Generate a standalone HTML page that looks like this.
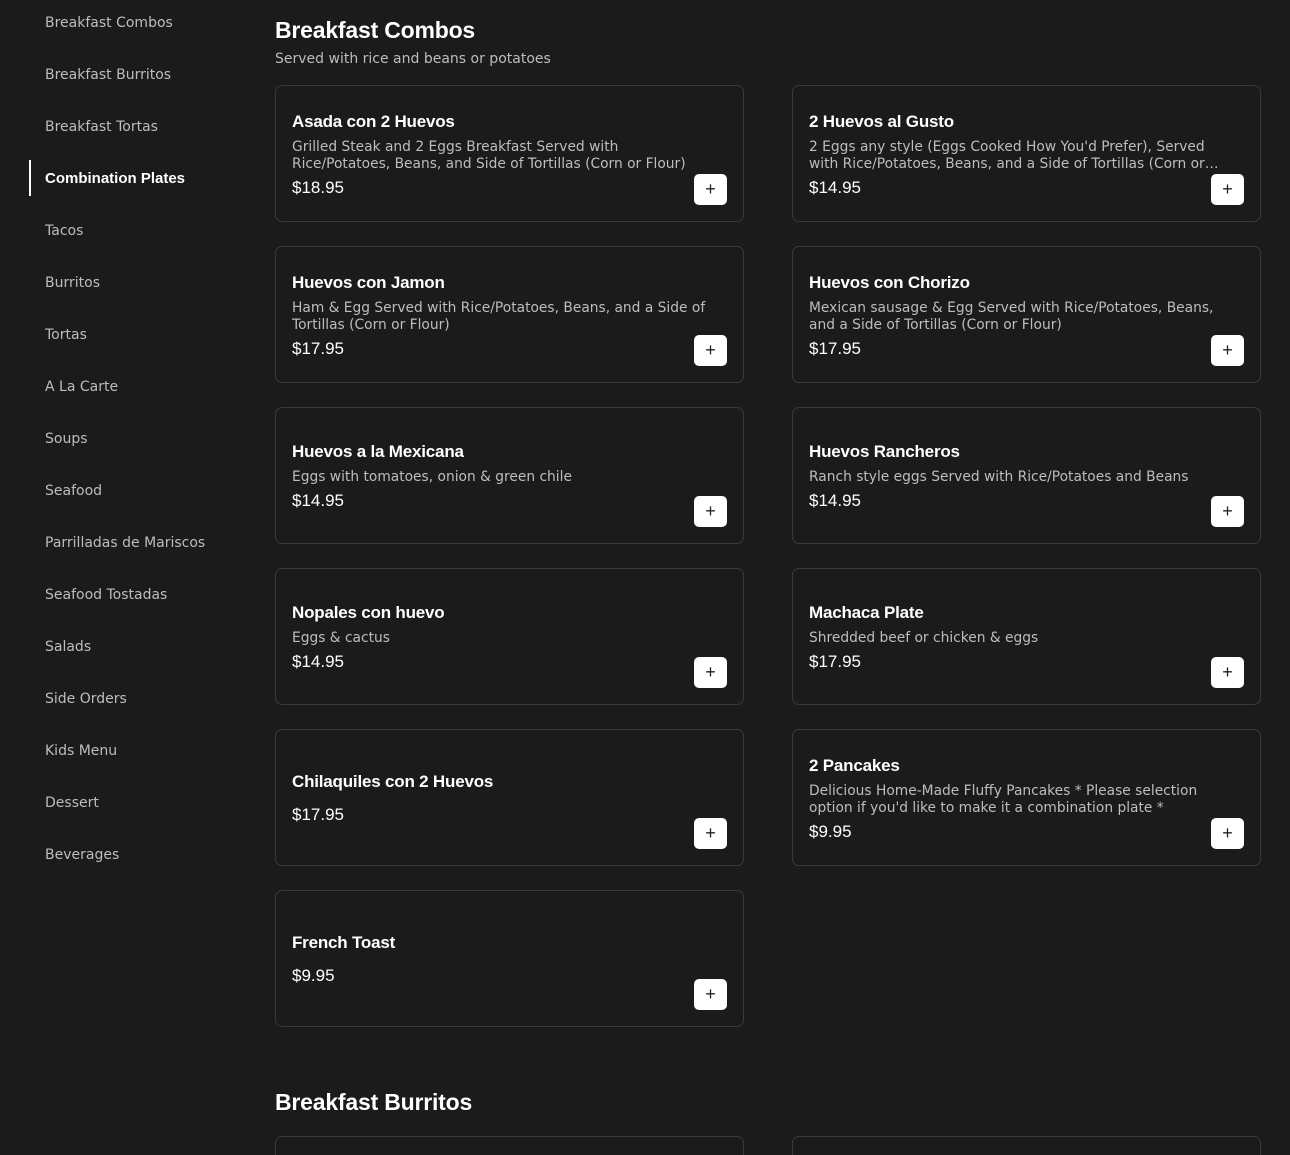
<!DOCTYPE html>
<html><head><meta charset="utf-8"><style>
*{box-sizing:border-box;margin:0;padding:0}
html,body{width:1290px;height:1155px;overflow:hidden}
body{background:#1b1b1b;color:#fff;font-family:"Liberation Sans",sans-serif;position:relative}
.side a{position:absolute;left:45px;font:14px "DejaVu Sans",sans-serif;color:#bdbdbd;line-height:20px}
.side a.act{color:#fff;font-family:"Liberation Sans",sans-serif;font-size:15px;font-weight:bold}
.bar{position:absolute;left:29px;top:160px;width:2px;height:36px;background:#fff}
h1{position:absolute;left:275px;font-size:23px;font-weight:bold;letter-spacing:-0.2px}
.sub{position:absolute;left:275px;top:51px;font:14px "DejaVu Sans",sans-serif;color:#bdbdbd}
.card{position:absolute;width:469px;height:137px;border:1px solid #3a3a3a;border-radius:7px;padding:3px 16px 0;display:flex;flex-direction:column;justify-content:center}
.t{font-size:17px;line-height:22px;margin-bottom:6px;font-weight:bold;letter-spacing:-0.2px}
.d{font:13.8px/17px "DejaVu Sans",sans-serif;color:#bdbdbd;margin-bottom:3px;white-space:nowrap;overflow:hidden;text-overflow:ellipsis}
.p{font-size:17px;line-height:24px}
.b{position:absolute;right:16px;bottom:16px;width:33px;height:31px;background:#fff;border-radius:5px;color:#222;font-size:18px;text-align:center;line-height:31px}
</style></head><body>
<div class="side">
<a style="top:13px">Breakfast Combos</a>
<a style="top:65px">Breakfast Burritos</a>
<a style="top:117px">Breakfast Tortas</a>
<div class="bar"></div>
<a class="act" style="top:169px">Combination Plates</a>
<a style="top:221px">Tacos</a>
<a style="top:273px">Burritos</a>
<a style="top:325px">Tortas</a>
<a style="top:377px">A La Carte</a>
<a style="top:429px">Soups</a>
<a style="top:481px">Seafood</a>
<a style="top:533px">Parrilladas de Mariscos</a>
<a style="top:585px">Seafood Tostadas</a>
<a style="top:637px">Salads</a>
<a style="top:689px">Side Orders</a>
<a style="top:741px">Kids Menu</a>
<a style="top:793px">Dessert</a>
<a style="top:845px">Beverages</a>
</div>
<h1 style="top:17px">Breakfast Combos</h1>
<div class="sub">Served with rice and beans or potatoes</div>

<div class="card" style="left:275px;top:85px"><div class="t">Asada con 2 Huevos</div><div class="d" style="white-space:normal">Grilled Steak and 2 Eggs Breakfast Served with<br>Rice/Potatoes, Beans, and Side of Tortillas (Corn or Flour)</div><div class="p">$18.95</div><div class="b">+</div></div>
<div class="card" style="left:792px;top:85px"><div class="t">2 Huevos al Gusto</div><div class="d" style="margin-bottom:0">2 Eggs any style (Eggs Cooked How You'd Prefer), Served</div><div class="d">with Rice/Potatoes, Beans, and a Side of Tortillas (Corn or…</div><div class="p">$14.95</div><div class="b">+</div></div>

<div class="card" style="left:275px;top:246px"><div class="t">Huevos con Jamon</div><div class="d" style="white-space:normal">Ham &amp; Egg Served with Rice/Potatoes, Beans, and a Side of<br>Tortillas (Corn or Flour)</div><div class="p">$17.95</div><div class="b">+</div></div>
<div class="card" style="left:792px;top:246px"><div class="t">Huevos con Chorizo</div><div class="d" style="white-space:normal">Mexican sausage &amp; Egg Served with Rice/Potatoes, Beans,<br>and a Side of Tortillas (Corn or Flour)</div><div class="p">$17.95</div><div class="b">+</div></div>

<div class="card" style="left:275px;top:407px"><div class="t">Huevos a la Mexicana</div><div class="d">Eggs with tomatoes, onion &amp; green chile</div><div class="p">$14.95</div><div class="b">+</div></div>
<div class="card" style="left:792px;top:407px"><div class="t">Huevos Rancheros</div><div class="d">Ranch style eggs Served with Rice/Potatoes and Beans</div><div class="p">$14.95</div><div class="b">+</div></div>

<div class="card" style="left:275px;top:568px"><div class="t">Nopales con huevo</div><div class="d">Eggs &amp; cactus</div><div class="p">$14.95</div><div class="b">+</div></div>
<div class="card" style="left:792px;top:568px"><div class="t">Machaca Plate</div><div class="d">Shredded beef or chicken &amp; eggs</div><div class="p">$17.95</div><div class="b">+</div></div>

<div class="card" style="left:275px;top:729px"><div class="t" style="margin-bottom:10px">Chilaquiles con 2 Huevos</div><div class="p">$17.95</div><div class="b">+</div></div>
<div class="card" style="left:792px;top:729px"><div class="t">2 Pancakes</div><div class="d" style="white-space:normal">Delicious Home-Made Fluffy Pancakes * Please selection<br>option if you'd like to make it a combination plate *</div><div class="p">$9.95</div><div class="b">+</div></div>

<div class="card" style="left:275px;top:890px"><div class="t" style="margin-bottom:10px">French Toast</div><div class="p">$9.95</div><div class="b">+</div></div>

<h1 style="top:1089px">Breakfast Burritos</h1>
<div class="card" style="left:275px;top:1136px;height:40px"></div>
<div class="card" style="left:792px;top:1136px;height:40px"></div>
</body></html>
